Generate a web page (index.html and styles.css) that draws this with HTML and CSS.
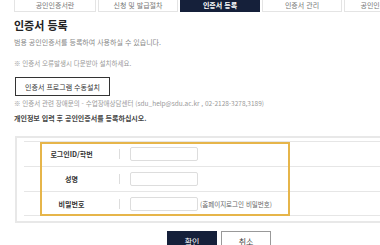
FILE: index.html
```html
<!DOCTYPE html>
<html lang="ko">
<head>
  <meta charset="UTF-8" />
  <title>인증서 등록</title>
  <link rel="stylesheet" href="styles.css">
</head>
<body>

<div class="page">
  <ul class="tabs">
    <li>공인인증서란</li>
    <li>신청 및 발급절차</li>
    <li class="on">인증서 등록</li>
    <li>인증서 관리</li>
    <li>공인인증서 안내</li>
  </ul>

  <h2 class="title">인증서 등록</h2>
  <p class="desc">범용 공인인증서를 등록하여 사용하실 수 있습니다.</p>

  <p class="note">※ 인증서 오류발생시 다운받아 설치하세요.</p>
  <button class="btn-install">인증서 프로그램 수동설치</button>
  <p class="note">※ 인증서 관련 장애문의 - 수업장애상담센터 (sdu_help@sdu.ac.kr , 02-2128-3278,3189)</p>

  <p class="guide">개인정보 입력 후 공인인증서를 등록하십시오.</p>

  <div class="form-box">
    <div class="highlight"></div>
    <div class="row">
      <div class="label">로그인ID/학번</div>
      <div class="field"><input type="text" /></div>
    </div>
    <div class="row">
      <div class="label">성명</div>
      <div class="field"><input type="text" /></div>
    </div>
    <div class="row">
      <div class="label">비밀번호</div>
      <div class="field"><input type="password" /><span class="hint">(홈페이지로그인 비밀번호)</span></div>
    </div>
  </div>

  <div class="actions">
    <button class="btn-ok">확인</button>
    <button class="btn-cancel">취소</button>
  </div>
</div>

</body>
</html>
```

FILE: styles.css
```css
html, body {
  margin: 0;
  overflow: hidden;
}

body {
  font-family: "Noto Sans CJK KR", "Noto Sans", sans-serif;
  color: #555;
  background: #fff;
}

.page {
  width: 420px;
  padding-left: 14px;
}

.tabs {
  list-style: none;
  margin: 0;
  padding: 0;
  display: flex;
  gap: 2px;
}

.tabs li {
  width: 80px;
  height: 12px;
  line-height: 10px;
  font-size: 7px;
  text-align: center;
  color: #777;
  border: 1px solid #e4e4e4;
  border-top: none;
  box-sizing: border-box;
}

.tabs li:first-child {
  width: 82px;
}

.tabs li.on {
  background: #15203a;
  border-color: #15203a;
  color: #fff;
  font-weight: bold;
}

.title {
  margin: 6px 0 0;
  font-size: 11px;
  line-height: 14px;
  color: #222;
}

.desc {
  margin: 5px 0 0;
  font-size: 7px;
  line-height: 10px;
  color: #888;
}

.note {
  margin: 11px 0 0;
  font-size: 6.5px;
  line-height: 10px;
  color: #999;
}

.btn-install {
  display: block;
  margin: 9px 0 0 1px;
  width: 95px;
  height: 19px;
  padding: 0;
  border: 1.5px solid #333;
  background: #fff;
  font-family: inherit;
  font-size: 7px;
  color: #333;
}

.btn-install + .note {
  margin-top: 2px;
}

.guide {
  margin: 5px 0 0;
  font-size: 7px;
  line-height: 10px;
  font-weight: bold;
  color: #444;
}

.form-box {
  position: relative;
  margin: 13px 0 0 1px;
  border: 2px solid #e8e8e8;
  padding: 3px 0 5px 7px;
}

.row {
  display: flex;
  align-items: center;
  height: 25px;
  border-top: 1px solid #e6e6e6;
  box-sizing: border-box;
}

.row:last-of-type {
  border-bottom: 1px solid #e6e6e6;
}

.label {
  width: 95px;
  text-align: center;
  font-size: 7px;
  font-weight: bold;
  color: #333;
  border-right: 1px solid #ddd;
  line-height: 10px;
}

.field {
  display: flex;
  align-items: center;
  padding-left: 10px;
}

.field input {
  width: 68px;
  height: 14px;
  box-sizing: border-box;
  border: 1px solid #ddd;
  border-radius: 2px;
  margin: 0;
}

.hint {
  margin-left: 2px;
  font-size: 6.5px;
  color: #666;
}

.highlight {
  position: absolute;
  left: 23px;
  top: 4px;
  width: 250px;
  height: 74px;
  border: 2px solid #e6b54a;
  box-sizing: border-box;
  pointer-events: none;
}

.actions {
  display: flex;
  gap: 4px;
  margin: 8px 0 0 153px;
}

.actions button {
  width: 50px;
  height: 20px;
  font-family: inherit;
  font-size: 8px;
  padding: 0;
}

.btn-ok {
  background: #15203a;
  border: 1px solid #15203a;
  color: #fff;
}

.btn-cancel {
  background: #fff;
  border: 1px solid #999;
  color: #444;
}
```
